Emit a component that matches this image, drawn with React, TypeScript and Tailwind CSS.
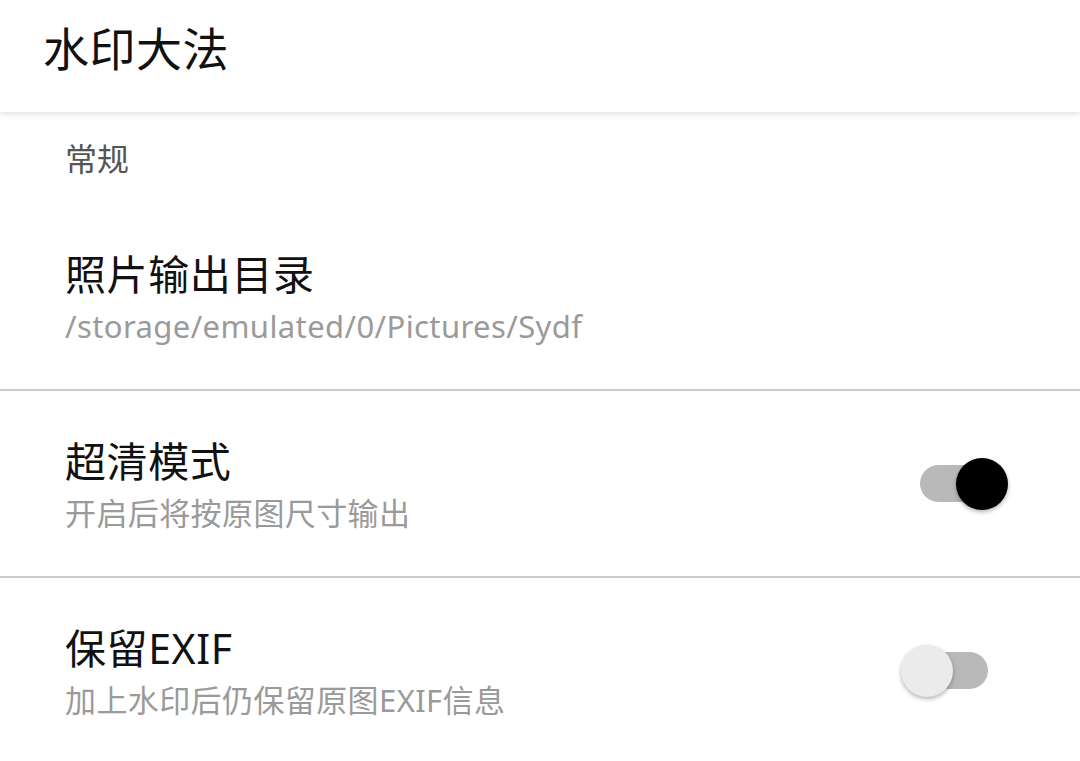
import React, { useState } from 'react';

interface Pref {
    id: string;
    title: string;
    summary: string;
    toggle?: boolean;
    on?: boolean;
}

const prefs: Pref[] = [
    { id: 'dir', title: '照片输出目录', summary: '/storage/emulated/0/Pictures/Sydf' },
    { id: 'hd', title: '超清模式', summary: '开启后将按原图尺寸输出', toggle: true, on: true },
    { id: 'exif', title: '保留EXIF', summary: '加上水印后仍保留原图EXIF信息', toggle: true, on: false },
];

function Switch({ initial }: { initial: boolean }) {
    const [on, setOn] = useState(initial);
    return (
        <button
            onClick={() => setOn(!on)}
            className="relative w-[68px] h-[37px] rounded-full bg-[#b9b9b9] flex-shrink-0"
        >
            <span
                className={`absolute top-1/2 -translate-y-1/2 w-[52px] h-[52px] rounded-full shadow-[0_2px_4px_rgba(0,0,0,0.3)] ${on ? 'left-[36px] bg-black' : 'left-[-19px] bg-[#ebebeb]'}`}
            />
        </button>
    );
}

export default function App() {
    return (
        <div className="w-[1080px] h-[761px] overflow-hidden bg-white" style={{ fontFamily: '"Noto Sans", "Noto Sans CJK SC", sans-serif' }}>
            <div className="relative z-10 h-[112px] flex items-center pl-[43px] bg-white shadow-[0_2px_6px_rgba(0,0,0,0.12)]">
                <h1 className="text-[46px] leading-none text-[#111] pb-[16px] tracking-[0.5px]">水印大法</h1>
            </div>
            <div className="h-[92px] flex items-center pl-[65px]">
                <span className="text-[32px] leading-none text-[#555] pt-[2px]">常规</span>
            </div>
            {prefs.map((p) => (
                <div key={p.id}>
                    <div className="h-[185px] flex items-center pl-[65px] pr-[92px]">
                        <div className="flex-1 flex flex-col gap-[10px]">
                            <p className="text-[41px] leading-[48px] text-[#111] tracking-[0.6px]">{p.title}</p>
                            <p className="text-[31px] leading-[36px] text-[#9a9a9a] tracking-[0.4px]">{p.summary}</p>
                        </div>
                        {p.toggle && <Switch initial={!!p.on} />}
                    </div>
                    <div className="h-[2px] bg-[#cccccc]" />
                </div>
            ))}
        </div>
    );
}
